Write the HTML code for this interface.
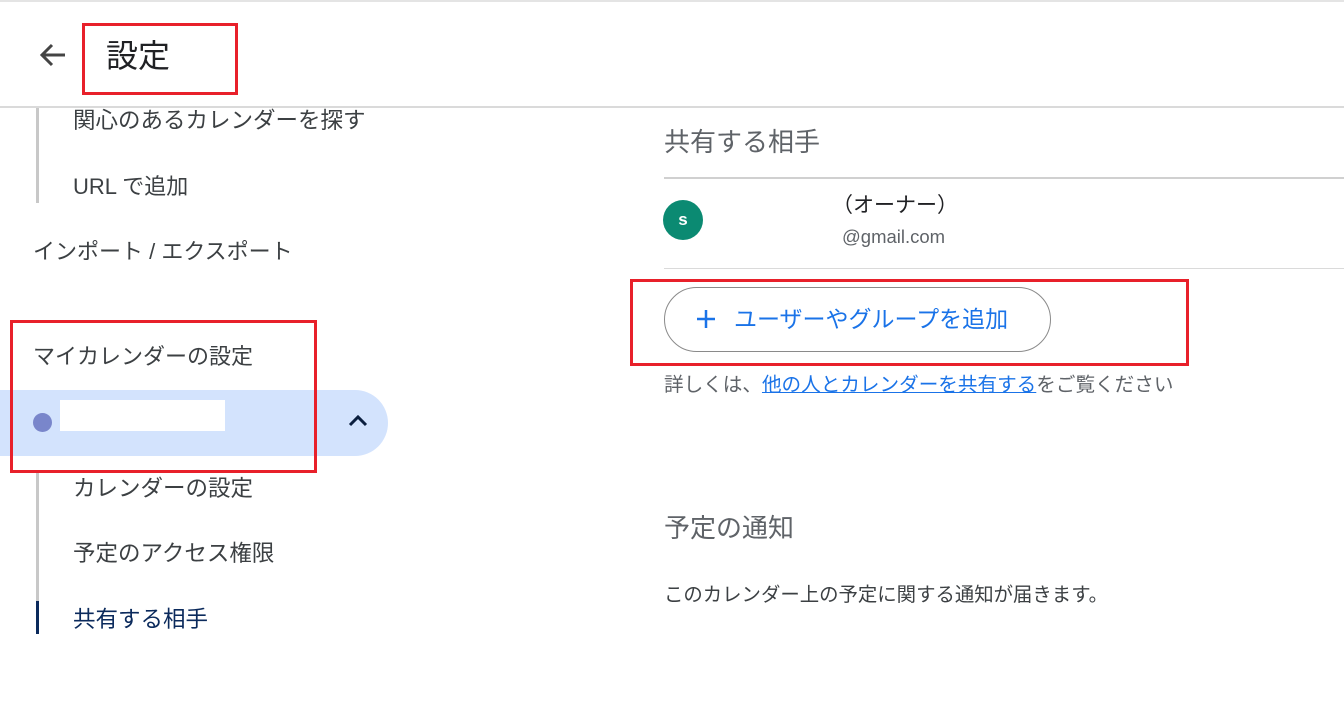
<!DOCTYPE html>
<html><head><meta charset="utf-8"><style>
*{margin:0;padding:0;box-sizing:border-box}
body{width:1344px;height:713px;position:relative;background:#fff;font-family:"Liberation Sans","Noto Sans CJK JP",sans-serif;color:#3c4043;overflow:hidden}
.a{position:absolute;white-space:nowrap;line-height:1}
.red{position:absolute;border:3px solid #e8202a}
</style></head><body>
<div class="a" style="left:0;top:0;width:1344px;height:2px;background:#e4e4e4"></div>
<div class="a" style="left:0;top:106px;width:1344px;height:2px;background:#dadada"></div>
<svg class="a" style="left:38px;top:42px" width="30" height="26" viewBox="0 0 30 26"><path d="M27 13H5M14 3L4 13l10 10" fill="none" stroke="#444" stroke-width="3"/></svg>
<div class="a" style="left:106px;top:40px;font-size:32px;color:#202124">設定</div>
<div class="red" style="left:82px;top:23px;width:156px;height:72px"></div>

<div class="a" style="left:36px;top:108px;width:3px;height:95px;background:#c8c8c8"></div>
<div class="a" style="left:73px;top:110px;font-size:22.5px">関心のあるカレンダーを探す</div>
<div class="a" style="left:73px;top:176px;font-size:22px">URL で追加</div>
<div class="a" style="left:33px;top:241px;font-size:22px">インポート / エクスポート</div>
<div class="a" style="left:33px;top:346px;font-size:22px">マイカレンダーの設定</div>
<div class="a" style="left:0;top:390px;width:388px;height:66px;background:#d3e3fd;border-radius:0 33px 33px 0"></div>
<div class="a" style="left:33px;top:413px;width:19px;height:19px;border-radius:50%;background:#7986cb"></div>
<div class="a" style="left:60px;top:400px;width:165px;height:31px;background:#fff"></div>
<svg class="a" style="left:348px;top:414px" width="20" height="14" viewBox="0 0 20 14"><path d="M2 11l8-8 8 8" fill="none" stroke="#0b1f3f" stroke-width="3"/></svg>
<div class="red" style="left:10px;top:320px;width:307px;height:153px"></div>
<div class="a" style="left:36px;top:473px;width:3px;height:128px;background:#c8c8c8"></div>
<div class="a" style="left:36px;top:601px;width:3px;height:33px;background:#0b2a5c"></div>
<div class="a" style="left:73px;top:478px;font-size:22.5px">カレンダーの設定</div>
<div class="a" style="left:73px;top:543px;font-size:22.5px">予定のアクセス権限</div>
<div class="a" style="left:73px;top:609px;font-size:22.5px;color:#0b2a5c">共有する相手</div>

<div class="a" style="left:664px;top:129px;font-size:26px;color:#5f6368">共有する相手</div>
<div class="a" style="left:664px;top:177px;width:680px;height:2px;background:#d0d0d0"></div>
<div class="a" style="left:663px;top:200px;width:40px;height:40px;border-radius:50%;background:#0b8a72;color:#fff;font-size:17px;font-weight:bold;text-align:center;line-height:40px">s</div>
<div class="a" style="left:832px;top:195px;font-size:21px;color:#202124">（オーナー）</div>
<div class="a" style="left:842px;top:228px;font-size:18.5px;color:#5f6368">@gmail.com</div>
<div class="a" style="left:664px;top:268px;width:680px;height:1px;background:#dadada"></div>
<div class="a" style="left:664px;top:287px;width:387px;height:65px;border:1px solid #8a8a8a;border-radius:33px"></div>
<svg class="a" style="left:695px;top:308px" width="22" height="22" viewBox="0 0 22 22"><path d="M11 2v18M2 11h18" stroke="#1a73e8" stroke-width="2.5"/></svg>
<div class="a" style="left:734px;top:308px;font-size:23px;color:#1a73e8">ユーザーやグループを追加</div>
<div class="red" style="left:630px;top:279px;width:559px;height:87px"></div>
<div class="a" style="left:664px;top:376px;font-size:19.6px;color:#5f6368">詳しくは、<span style="color:#1a73e8;text-decoration:underline">他の人とカレンダーを共有する</span>をご覧ください</div>
<div class="a" style="left:664px;top:515px;font-size:26px;color:#5f6368">予定の通知</div>
<div class="a" style="left:664px;top:586px;font-size:19.4px;color:#3c4043">このカレンダー上の予定に関する通知が届きます。</div>
</body></html>
